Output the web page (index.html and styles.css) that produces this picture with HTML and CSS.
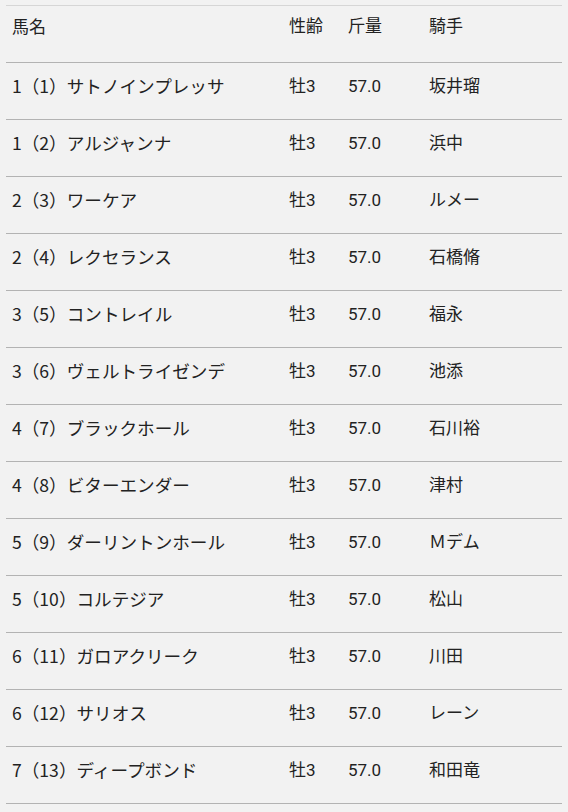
FILE: index.html
```html
<!DOCTYPE html>
<html lang="ja">
<head>
<meta charset="utf-8">
<title>出馬表</title>
<link rel="stylesheet" href="styles.css">
</head>
<body>
<table class="entries">
  <colgroup>
    <col class="c-name"><col class="c-sex"><col class="c-wt"><col class="c-jk">
  </colgroup>
  <thead>
    <tr><th class="name">馬名</th><th>性齢</th><th>斤量</th><th>騎手</th></tr>
  </thead>
  <tbody>
    <tr><td class="name">1（1）サトノインプレッサ</td><td>牡3</td><td>57.0</td><td>坂井瑠</td></tr>
    <tr><td class="name">1（2）アルジャンナ</td><td>牡3</td><td>57.0</td><td>浜中</td></tr>
    <tr><td class="name">2（3）ワーケア</td><td>牡3</td><td>57.0</td><td>ルメー</td></tr>
    <tr><td class="name">2（4）レクセランス</td><td>牡3</td><td>57.0</td><td>石橋脩</td></tr>
    <tr><td class="name">3（5）コントレイル</td><td>牡3</td><td>57.0</td><td>福永</td></tr>
    <tr><td class="name">3（6）ヴェルトライゼンデ</td><td>牡3</td><td>57.0</td><td>池添</td></tr>
    <tr><td class="name">4（7）ブラックホール</td><td>牡3</td><td>57.0</td><td>石川裕</td></tr>
    <tr><td class="name">4（8）ビターエンダー</td><td>牡3</td><td>57.0</td><td>津村</td></tr>
    <tr><td class="name">5（9）ダーリントンホール</td><td>牡3</td><td>57.0</td><td>Ｍデム</td></tr>
    <tr><td class="name">5（10）コルテジア</td><td>牡3</td><td>57.0</td><td>松山</td></tr>
    <tr><td class="name">6（11）ガロアクリーク</td><td>牡3</td><td>57.0</td><td>川田</td></tr>
    <tr><td class="name">6（12）サリオス</td><td>牡3</td><td>57.0</td><td>レーン</td></tr>
    <tr><td class="name">7（13）ディープボンド</td><td>牡3</td><td>57.0</td><td>和田竜</td></tr>
  </tbody>
</table>
</body>
</html>
```
FILE: styles.css
```css
html, body {
  margin: 0;
  padding: 0;
  background: #f2f2f2;
}
body {
  padding: 5px 6px;
  font-family: Roboto, "Noto Sans CJK JP", sans-serif;
  font-size: 17px;
  color: #222;
}
.entries {
  width: 556px;
  border-collapse: collapse;
  table-layout: fixed;
}
.c-name { width: 277px; }
.c-sex { width: 59px; }
.c-wt { width: 81px; }
.c-jk { width: 139px; }
.entries th,
.entries td {
  text-align: left;
  font-weight: normal;
  line-height: 24px;
  padding: 11px 0 21px 6px;
  border-bottom: 1px solid #b3b3b3;
  vertical-align: top;
  white-space: nowrap;
}
.entries thead th {
  border-top: 1px solid #d6d6d6;
  padding: 8px 0 24px 6px;
}
.entries .name {
  font-family: "Noto Sans CJK JP", sans-serif;
  font-size: 17.6px;
}
.entries thead .name {
  font-size: 17px;
}
```
